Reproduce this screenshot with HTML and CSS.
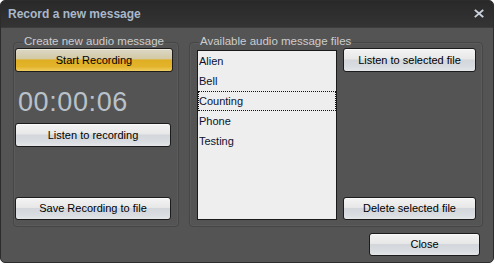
FILE: index.html
```html
<!DOCTYPE html>
<html>
<head>
<meta charset="utf-8">
<link rel="stylesheet" href="styles.css">
</head>
<body>
<div class="window">
  <div class="titlebar">
    <span class="title">Record a new message</span>
    <svg class="close-x" width="10" height="9" viewBox="0 0 10 9"><path d="M1.5 1.5 L8.5 7.5 M8.5 1.5 L1.5 7.5" stroke="#c9d1db" stroke-width="1.9" stroke-linecap="square"/></svg>
  </div>
  <div class="main">
    <div class="groups">
      <div class="group group-left">
        <span class="legend">Create new audio message</span>
        <button class="btn btn-gold btn-start">Start Recording</button>
        <div class="timer">00:00:06</div>
        <button class="btn btn-left btn-listen">Listen to recording</button>
        <button class="btn btn-left btn-save">Save Recording to file</button>
      </div>
      <div class="group group-right">
        <span class="legend">Available audio message files</span>
        <div class="listbox">
          <div class="item">Alien</div>
          <div class="item">Bell</div>
          <div class="item item-focus">Counting</div>
          <div class="item">Phone</div>
          <div class="item">Testing</div>
        </div>
        <div class="side">
          <button class="btn btn-side">Listen to selected file</button>
          <button class="btn btn-side">Delete selected file</button>
        </div>
      </div>
    </div>
    <div class="footer">
      <button class="btn btn-close">Close</button>
    </div>
  </div>
</div>
</body>
</html>
```

FILE: styles.css
```css
* { box-sizing: border-box; }
html, body { margin: 0; padding: 0; background: #ffffff; }
body { font-family: "Liberation Sans", Arial, sans-serif; font-size: 11px; }

.window {
  width: 494px;
  height: 263px;
  background: #545454;
  border: 1px solid #2c2c2c;
  border-radius: 5px;
  overflow: hidden;
  display: flex;
  flex-direction: column;
}

.titlebar {
  height: 27px;
  flex: none;
  background: linear-gradient(#292929, #343434);
  display: flex;
  align-items: center;
  justify-content: space-between;
  padding: 0 9px 0 7px;
  border-bottom: 1px solid #3c3c3c;
}
.title {
  font-weight: bold;
  font-size: 12px;
  color: #a9b8ca;
  line-height: 27px;
}
.close-x { display: block; margin-top: -1px; }

.main {
  flex: 1;
  padding: 14px 0 0 12px;
  display: flex;
  flex-direction: column;
}
.groups {
  display: flex;
  gap: 10px;
}
.group {
  position: relative;
  height: 185px;
  border: 1px solid #464646;
  border-radius: 4px;
  box-shadow: 0 0 0 1px #5b5b5b inset;
}
.legend {
  position: absolute;
  top: -8px;
  left: 9px;
  padding: 0 1px;
  background: #545454;
  color: #cdcdcd;
  line-height: 13px;
  font-size: 11.5px;
}
.group-left {
  width: 166px;
  display: flex;
  flex-direction: column;
  align-items: flex-start;
  padding: 5px 0 0 1px;
}
.group-right {
  width: 294px;
  display: flex;
  align-items: flex-start;
  padding: 7px 0 0 7px;
  gap: 6px;
}

.btn {
  font-family: "Liberation Sans", Arial, sans-serif;
  font-size: 11px;
  color: #000000;
  height: 24px;
  padding: 0;
  border: 1px solid #1c1c1c;
  border-radius: 3px;
  background: linear-gradient(#f3f3f3 0%, #e8e8e8 45%, #d3d7db 50%, #d9dce0 80%, #e4e6e8 100%);
  box-shadow: inset 0 1px 0 #fafafa;
  text-align: center;
  line-height: 22px;
}
.btn-gold {
  background: linear-gradient(#dcd7c7 0%, #d3caa5 44%, #dfae22 50%, #e3b42b 80%, #efcb62 100%);
  box-shadow: inset 0 1px 0 #ece8da;
}
.btn-start { width: 158px; }
.btn-left { width: 156px; }

.timer {
  margin-top: 15px;
  margin-left: 3px;
  font-size: 27px;
  line-height: 30px;
  color: #b9c1ca;
  letter-spacing: 0.6px;
}
.btn-listen { margin-top: 6px; }
.btn-save { margin-top: 50px; height: 23px; line-height: 21px; }

.listbox {
  width: 140px;
  height: 170px;
  background: #eeeeee;
  border: 1px solid #1a1a1a;
  display: flex;
  flex-direction: column;
}
.item {
  height: 20px;
  line-height: 18px;
  padding-left: 0;
  color: #0b1230;
  font-size: 11px;
  border: 1px solid transparent;
}
.item-focus { border: 1px dotted #111; }

.side {
  display: flex;
  flex-direction: column;
  margin-top: -2px;
}
.btn-side { width: 133px; }
.btn-side + .btn-side { margin-top: 125px; height: 23px; line-height: 21px; }

.footer {
  display: flex;
  justify-content: flex-end;
  padding-right: 13px;
  margin-top: 6px;
}
.btn-close { width: 111px; height: 23px; line-height: 21px; }
```
